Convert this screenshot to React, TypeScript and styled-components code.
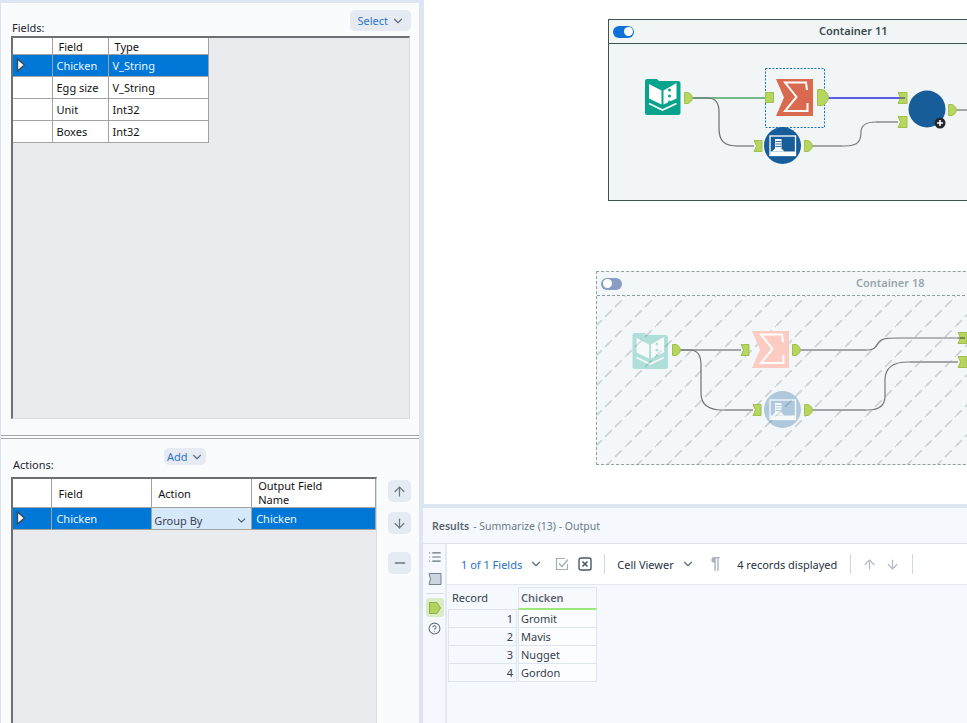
import React from "react";
import styled, { createGlobalStyle } from "styled-components";
import { ArrowDown, ArrowUp, ChevronDown, CircleHelp, List, Minus } from "lucide-react";

const Global = createGlobalStyle`
  html, body { margin: 0; padding: 0; width: 967px; height: 723px; overflow: hidden; background: #dde5f1; }
  * { box-sizing: border-box; }
  body { font-family: "Noto Sans", "Open Sans", sans-serif; font-size: 11px; color: #1c2733; }
`;

const Shell = styled.div`
  display: flex;
  width: 967px;
  height: 723px;
  overflow: hidden;
`;
const LeftPane = styled.div`
  width: 418px;
  margin: 3px 0 0 1px;
  display: flex;
  flex-direction: column;
  background: #f9fbfd;
  flex: none;
  overflow: hidden;
`;
const FieldsSection = styled.section`
  height: 432px;
  flex: none;
  display: flex;
  flex-direction: column;
`;
const SectionHead = styled.div`
  display: flex;
  justify-content: space-between;
  height: 33px;
  padding: 7px 8px 0 11px;
`;
const SectionLabel = styled.span`
  align-self: flex-end;
  font-size: 11px;
  line-height: 14px;
  padding-bottom: 1px;
`;
const PillButton = styled.button<{ $h: number; $pad: number; $gap: number }>`
  display: inline-flex;
  align-items: center;
  gap: ${(p) => p.$gap}px;
  height: ${(p) => p.$h}px;
  padding: 0 ${(p) => p.$pad - 1}px 0 ${(p) => p.$pad}px;
  border: 0;
  border-radius: 5px;
  background: #e6ebf3;
  color: #2f76c9;
  font: 11px "Noto Sans", sans-serif;
`;
const GridFrame = styled.div`
  margin: 0 0 0 10px;
  width: 399px;
  height: 383px;
  flex: none;
  background: #e9ebef;
  border-top: 2px solid #6d6f72;
  border-left: 2px solid #6d6f72;
  border-right: 1px solid #d9dbde;
  border-bottom: 1px solid #d9dbde;
`;
const DataTable = styled.table`
  border-collapse: collapse;
  table-layout: fixed;
  background: #fff;
  font-size: 11px;
`;
const HeadCell = styled.th<{ $h: number; $w: number }>`
  font-weight: 400;
  text-align: left;
  padding: 2px 0 0 6px;
  height: ${(p) => p.$h}px;
  width: ${(p) => p.$w}px;
  border-right: 1px solid #a3a3a3;
  border-bottom: 1px solid #a3a3a3;
  line-height: 14px;
  color: #111;
`;
const WrappedHeadCell = styled(HeadCell)`
  padding-top: 0;
`;
const Row = styled.tr<{ $selected?: boolean }>`
  background: ${(p) => (p.$selected ? "#0078d7" : "#fff")};
  color: ${(p) => (p.$selected ? "#eef6fd" : "#111")};
`;
const Cell = styled.td`
  height: 22px;
  padding: 0 0 0 4px;
  border-right: 1px solid #a3a3a3;
  border-bottom: 1px solid #a3a3a3;
  white-space: nowrap;
`;
const PointerCell = styled(Cell)`
  padding: 2px 0 0 3px;
  vertical-align: middle;
`;
const DropCell = styled(Cell)`
  background: #d6e9fb;
  color: #1c2733;
  padding: 3px 3px 0 2px;
`;
const DropInner = styled.div`
  display: flex;
  justify-content: space-between;
  align-items: center;
  color: #39424c;
`;
const Divider = styled.div`
  height: 4px;
  flex: none;
  border-top: 1px solid #a3a6aa;
  border-bottom: 1px solid #a3a6aa;
`;
const ActionsSection = styled.section`
  flex: 1;
  display: flex;
  flex-direction: column;
  min-height: 0;
`;
const ActionsHead = styled.div`
  display: flex;
  flex: none;
  height: 38px;
  padding: 9px 0 0 12px;
`;
const ActionsLabel = styled(SectionLabel)`
  width: 151px;
  padding-bottom: 5px;
  flex: none;
`;
const ActionsBody = styled.div`
  flex: none;
  display: flex;
  padding-left: 10px;
  gap: 11px;
`;
const ActionsGrid = styled(GridFrame)`
  margin: 0;
  width: 366px;
  height: 260px;
`;
const SideButtons = styled.div`
  display: flex;
  flex-direction: column;
  gap: 10px;
  padding-top: 3px;
`;
const SquareButton = styled.button<{ $gap?: boolean }>`
  width: 23px;
  height: 22px;
  padding: 0;
  border: 0;
  border-radius: 5px;
  background: #e6ebf3;
  color: #6b7785;
  display: flex;
  align-items: center;
  justify-content: center;
  margin-top: ${(p) => (p.$gap ? "8px" : "0")};
`;
const RightPane = styled.div`
  flex: 1;
  margin-left: 5px;
  display: flex;
  flex-direction: column;
  min-width: 0;
`;
const Canvas = styled.div`
  height: 504px;
  flex: none;
  position: relative;
  background: #fff;
  overflow: hidden;
`;
const Container = styled.div<{ $x: number; $y: number; $h: number; $off?: boolean }>`
  position: absolute;
  left: ${(p) => p.$x}px;
  top: ${(p) => p.$y}px;
  width: 420px;
  height: ${(p) => p.$h}px;
  background: ${(p) => (p.$off ? "#f3f7f9" : "#f1f5f6")};
  border: 1px ${(p) => (p.$off ? "dashed #8fa09f" : "solid #3b5454")};
`;
const ContainerBar = styled.div<{ $off?: boolean }>`
  height: 24px;
  display: flex;
  align-items: center;
  padding-left: 4px;
  border-bottom: 1px ${(p) => (p.$off ? "dashed #8fa09f" : "solid #3b5454")};
`;
const Toggle = styled.span<{ $on?: boolean }>`
  width: 21px;
  height: 12px;
  border-radius: 6px;
  flex: none;
  position: relative;
  background: ${(p) => (p.$on ? "#0f72d8" : "#8a9dc2")};
  &::after {
    content: "";
    position: absolute;
    top: 1.5px;
    left: ${(p) => (p.$on ? "10.5px" : "1.5px")};
    width: 9px;
    height: 9px;
    border-radius: 50%;
    background: #fff;
  }
`;
const ContainerTitle = styled.span<{ $off?: boolean; $ml: number }>`
  margin: -2px 0 0 ${(p) => p.$ml}px;
  font-size: 11px;
  font-weight: 600;
  white-space: nowrap;
  color: ${(p) => (p.$off ? "#97a4a8" : "#3c4a50")};
`;
const Diagram = styled.svg`
  position: absolute;
  left: 0;
  top: 0;
  width: 543px;
  height: 504px;
`;
const ResultsBand = styled.div`
  height: 4px;
  flex: none;
  background: #dde5f1;
  margin-left: -1px;
`;
const Results = styled.div`
  flex: 1;
  display: flex;
  flex-direction: column;
  background: #f5f8fd;
  min-height: 0;
  margin-left: -1px;
`;
const ResultsHead = styled.div`
  height: 36px;
  flex: none;
  padding: 0 0 0 9px;
  display: flex;
  align-items: center;
  gap: 4px;
  color: #6c7a88;
  font-size: 10.5px;
  border-bottom: 1px solid #dde5f1;
`;
const ResultsStrong = styled.strong`
  font-weight: 600;
  color: #59646f;
`;
const ResultsBody = styled.div`
  flex: 1;
  display: flex;
  min-height: 0;
`;
const SideRail = styled.div`
  width: 24px;
  flex: none;
  display: flex;
  flex-direction: column;
  align-items: center;
  padding: 2px 0 0 1px;
  border-right: 2px solid #e4eaf3;
  color: #66727f;
`;
const RailIcon = styled.span<{ $active?: boolean }>`
  width: 18px;
  height: ${(p) => (p.$active ? 19 : 22)}px;
  display: flex;
  align-items: center;
  justify-content: center;
  border-radius: 3px;
  background: ${(p) => (p.$active ? "#d8ecc5" : "transparent")};
`;
const RailRule = styled.div`
  width: 18px;
  height: 1px;
  margin: 3px 0 4px;
  background: #d6dde7;
`;
const ResultsMain = styled.div`
  flex: 1;
  display: flex;
  flex-direction: column;
  min-width: 0;
`;
const Toolbar = styled.div`
  height: 41px;
  flex: none;
  display: flex;
  align-items: center;
  background: #fff;
  border-bottom: 1px solid #e2e8f1;
  padding-left: 14px;
  font-size: 11px;
`;
const ToolLink = styled.span`
  display: inline-flex;
  align-items: center;
  gap: 7px;
  color: #2a6ec5;
  white-space: nowrap;
`;
const ToolText = styled.span`
  color: #26323e;
  white-space: nowrap;
  display: inline-flex;
  align-items: center;
  gap: 7px;
`;
const ToolRule = styled.span`
  width: 1px;
  height: 20px;
  background: #cfd7e2;
  flex: none;
`;
const Spacer = styled.span<{ $w: number }>`
  width: ${(p) => p.$w}px;
  flex: none;
`;
const Pilcrow = styled.span`
  font: 700 17px "Liberation Sans", sans-serif;
  color: #a9b1ba;
`;
const ResultTable = styled.div`
  margin: 2px 0 0 1px;
  display: grid;
  grid-template-columns: 69px 79px;
  column-gap: 1px;
  width: 149px;
  font-size: 11px;
  color: #35404b;
`;
const RecordHead = styled.div`
  height: 23px;
  background: #f5f8fd;
  display: flex;
  align-items: center;
  padding: 0 0 1px 4px;
  border-bottom: 1px solid #dde5f1;
`;
const ColumnHead = styled(RecordHead)`
  font-weight: 600;
  color: #5d6872;
  border: 1px solid #dde5f1;
  border-bottom: 2px solid #9be87d;
  padding-left: 2px;
  background: #f7f9fd;
`;
const RecordCell = styled.div`
  height: 18px;
  background: #f5f8fd;
  border: 1px solid #dde5f1;
  border-top: 0;
  text-align: right;
  padding-right: 3px;
  line-height: 17px;
`;
const ValueCell = styled(RecordCell)`
  background: #fcfdff;
  text-align: left;
  padding-left: 2px;
`;
const ToolArrow = styled.span`
  color: #b3bbc5;
  display: inline-flex;
`;

const Pointer = () => (
  <svg width="10" height="14" viewBox="0 0 10 14">
    <path d="M1.5 1 L8.5 7 L1.5 13 Z" fill="#f3f6f9" stroke="#3d4650" strokeWidth="1.3" />
  </svg>
);

const OX = 424;

type Pt = { x: number; y: number; w?: number; h?: number };
const Out = ({ x, y, w = 8, h = 11 }: Pt) => (
  <path d={`M${x} ${y}H${x + w * 0.45}C${x + w * 0.8} ${y + h * 0.1} ${x + w} ${y + h * 0.35} ${x + w} ${y + h / 2}C${x + w} ${y + h * 0.65} ${x + w * 0.8} ${y + h * 0.9} ${x + w * 0.45} ${y + h}H${x}Z`} fill="#b7d65d" stroke="#a1bf50" strokeWidth="1" />
);
const InNotch = ({ x, y, w = 8, h = 11 }: Pt) => (
  <path d={`M${x} ${y}H${x + w}V${y + h}H${x}L${x + 2.5} ${y + h / 2}Z`} fill="#b7d65d" stroke="#a1bf50" strokeWidth="1" />
);
const InFlat = ({ x, y, w = 8, h = 10 }: Pt) => (
  <rect x={x} y={y} width={w} height={h} fill="#b7d65d" stroke="#a1bf50" strokeWidth="1" />
);

const BookIcon = ({ x, y, o = 1 }: { x: number; y: number; o?: number }) => (
  <g transform={`translate(${x} ${y})`} opacity={o}>
    <path d="M2 0H12L14 2H33Q35.500 2 35.500 4.500V33.500Q35.500 36 33 36H2.500Q0 36 0 33.500V2Q0 0 2 0Z" fill="#07a38d" />
    <path d="M4 5L16.500 11.500V25.500L4 19.500Z" fill="#fff" />
    <path d="M18.500 11.500L31.500 4V19.500L18.500 25.500Z" fill="#fff" />
    <circle cx="24.500" cy="11" r="1.500" fill="#07a38d" />
    <circle cx="24.500" cy="17" r="1.500" fill="#07a38d" />
    <circle cx="24.500" cy="23" r="1.500" fill="#07a38d" />
    <path d="M4 24.500L17.500 31L31.500 24.500" fill="none" stroke="#fff" strokeWidth="1.600" />
  </g>
);
const SigmaIcon = ({ x, y, o = 1, fill = "#d96a4f" }: { x: number; y: number; o?: number; fill?: string }) => (
  <g transform={`translate(${x} ${y})`} opacity={o}>
    <path d="M0 0H37V37H0L8 18.500Z" fill={fill} />
    <path d="M31 11L30 3.500H9L20.500 18L9 32H31.500V24" fill="none" stroke="#fff" strokeWidth="2" />
  </g>
);
const WindowCircle = ({ cx, cy, o = 1 }: { cx: number; cy: number; o?: number }) => (
  <g transform={`translate(${cx} ${cy})`} opacity={o}>
    <circle r="18.500" fill="#175d9a" />
    <rect x="-12.500" y="-9.500" width="25.500" height="19.500" fill="none" stroke="#fff" strokeWidth="1.300" />
    <path d="M-12 6H13V10H-12Z" fill="#fff" />
    <path d="M-7.500 -6.500H-1V3L2 6H-10.500L-7.500 3Z" fill="#fff" />
    <path d="M-7 -4H-1.500M-7 -1.500H-1.500M-7 1H-1.500" stroke="#175d9a" strokeWidth="0.900" />
  </g>
);

const Wires = () => (
  <Diagram viewBox={`${OX} 0 543 504`}>
    <defs>
      <pattern id="hatch" patternUnits="userSpaceOnUse" x="596" y="296" width="30" height="30">
        <path d="M-0.900 30.900L30.900 -0.900" stroke="#c8d2d3" strokeWidth="1.700" strokeDasharray="9.400 4.740" />
      </pattern>
    </defs>
    <rect x="597" y="296" width="370" height="168" fill="url(#hatch)" />

    {/* Active container */}
    <path d="M692 98H765" stroke="#74b98c" strokeWidth="2" fill="none" />
    <path d="M692 98H708C716 98 719 103 719 112V128C719 141 724 146 738 146H754" stroke="#6b6f70" strokeWidth="1.200" fill="none" />
    <path d="M736 146H754" stroke="#a5a8a8" strokeWidth="2" fill="none" />
    <path d="M828 98H900" stroke="#5a5ae6" strokeWidth="2" fill="none" />
    <path d="M812 146H845C858 146 861 141 861 132C861 125 866 122 876 122H898" stroke="#7b7e7e" strokeWidth="1.200" fill="none" />
    <path d="M812 146H842M876 122H898" stroke="#a3a6a6" strokeWidth="2" fill="none" />
    <path d="M956 110H967" stroke="#a3a6a6" strokeWidth="2" fill="none" />
    <BookIcon x={645} y={79} />
    <Out x={684.500} y={92.500} />
    <rect x="765.500" y="68.500" width="59" height="59" fill="none" stroke="#1476d2" strokeDasharray="2 1.500" />
    <InFlat x={765.500} y={92.500} />
    <SigmaIcon x={776} y={79} />
    <Out x={817.500} y={89.500} w={11} h={16} />
    <InNotch x={754} y={140.500} />
    <WindowCircle cx={782.500} cy={145.500} />
    <Out x={804.500} y={140.500} />
    <InNotch x={898} y={92.500} w={9} />
    <path d="M900 98H905" stroke="#2f2f7c" strokeWidth="1" />
    <InNotch x={898} y={116.500} w={9} />
    <circle cx="927" cy="109" r="18.500" fill="#175d9a" />
    <Out x={948.500} y={104.500} />
    <circle cx="940" cy="123" r="5.500" fill="#23282c" />
    <path d="M937 123H943M940 120V126" stroke="#fff" strokeWidth="1.600" />

    {/* Disabled container */}
    <path d="M680 350H741" stroke="#a3a6a6" strokeWidth="2" fill="none" />
    <path d="M680 350H690C698 350 701 355 701 365V393C701 405 708 410 722 410H753" stroke="#6f7374" strokeWidth="1.200" fill="none" />
    <path d="M725 410H753" stroke="#a3a6a6" strokeWidth="2" fill="none" />
    <path d="M800 350H868C877 350 876 344 880 341C883 338 890 338 900 338H958" stroke="#75797a" strokeWidth="1.200" fill="none" />
    <path d="M800 350H866" stroke="#a3a6a6" strokeWidth="2" fill="none" />
    <path d="M812 410H868C880 410 885 405 885 396V380C885 368 892 362 908 362H958" stroke="#75797a" strokeWidth="1.200" fill="none" />
    <path d="M812 410H866M910 362H958" stroke="#a3a6a6" strokeWidth="2" fill="none" />
    <BookIcon x={632.500} y={333} o={0.28} />
    <Out x={672.500} y={344.500} />
    <InNotch x={741} y={344.500} />
    <SigmaIcon x={752} y={331} o={1} fill="#fccbc2" />
    <Out x={792.500} y={344.500} />
    <InNotch x={753} y={404.500} />
    <WindowCircle cx={782.500} cy={409.500} o={0.3} />
    <Out x={804.500} y={404.500} />
    <InNotch x={958} y={332.500} w={9} />
    <path d="M958 338H965" stroke="#3a3f41" strokeWidth="1" />
    <InNotch x={958} y={356.500} w={9} />
  </Diagram>
);

const CheckBoxIcon = () => (
  <svg width="14" height="14" viewBox="0 0 14 14" fill="none" stroke="#a4acb6" strokeWidth="1.200">
    <path d="M12.500 7V12.500H1.500V1.500H10" />
    <path d="M4 6.500L7 9.500L13 2.500" />
  </svg>
);
const CrossBoxIcon = () => (
  <svg width="14" height="14" viewBox="0 0 14 14" fill="none">
    <rect x="1" y="1" width="12" height="12" rx="2" stroke="#4a5968" strokeWidth="1.400" />
    <path d="M4.500 4.500L9.500 9.500M9.500 4.500L4.500 9.500" stroke="#4a5968" strokeWidth="1.600" />
  </svg>
);
const SheetIcon = () => (
  <svg width="14" height="14" viewBox="0 0 14 14">
    <path d="M1 1.500H13V12.500H1L2.500 7Z" fill="#cbd4e0" stroke="#76828f" strokeWidth="1" />
  </svg>
);
const OutputIcon = () => (
  <svg width="14" height="14" viewBox="0 0 14 14">
    <path d="M1.500 1.500H9L12.500 7L9 12.500H1.500Z" fill="#b5d35c" stroke="#92ac4b" strokeWidth="1" />
  </svg>
);

const records = ["Gromit", "Mavis", "Nugget", "Gordon"];
const fields = [
  ["Chicken", "V_String"],
  ["Egg size", "V_String"],
  ["Unit", "Int32"],
  ["Boxes", "Int32"],
];

export default function App() {
  return (
    <Shell>
      <Global />
      <LeftPane>
        <FieldsSection>
          <SectionHead>
            <SectionLabel>Fields:</SectionLabel>
            <PillButton $h={21} $pad={7} $gap={3}>
              Select <ChevronDown size={14} color="#5f6f82" />
            </PillButton>
          </SectionHead>
          <GridFrame>
            <DataTable>
              <thead>
                <tr>
                  <HeadCell $h={16} $w={39} />
                  <HeadCell $h={16} $w={56}>Field</HeadCell>
                  <HeadCell $h={16} $w={100}>Type</HeadCell>
                </tr>
              </thead>
              <tbody>
                {fields.map((f, i) => (
                  <Row key={f[0]} $selected={i === 0}>
                    <PointerCell>{i === 0 && <Pointer />}</PointerCell>
                    <Cell>{f[0]}</Cell>
                    <Cell>{f[1]}</Cell>
                  </Row>
                ))}
              </tbody>
            </DataTable>
          </GridFrame>
        </FieldsSection>
        <Divider />
        <ActionsSection>
          <ActionsHead>
            <ActionsLabel>Actions:</ActionsLabel>
            <PillButton $h={17} $pad={3} $gap={2}>
              Add <ChevronDown size={14} color="#5f6f82" />
            </PillButton>
          </ActionsHead>
          <ActionsBody>
            <ActionsGrid>
              <DataTable>
                <thead>
                  <tr>
                    <HeadCell $h={28} $w={39} />
                    <HeadCell $h={28} $w={100}>Field</HeadCell>
                    <HeadCell $h={28} $w={100}>Action</HeadCell>
                    <WrappedHeadCell $h={28} $w={124}>Output Field<br />Name</WrappedHeadCell>
                  </tr>
                </thead>
                <tbody>
                  <Row $selected>
                    <PointerCell><Pointer /></PointerCell>
                    <Cell>Chicken</Cell>
                    <DropCell>
                      <DropInner>Group By <ChevronDown size={13} color="#4d5a68" /></DropInner>
                    </DropCell>
                    <Cell>Chicken</Cell>
                  </Row>
                </tbody>
              </DataTable>
            </ActionsGrid>
            <SideButtons>
              <SquareButton aria-label="up"><ArrowUp size={15} /></SquareButton>
              <SquareButton aria-label="down"><ArrowDown size={15} /></SquareButton>
              <SquareButton $gap aria-label="remove"><Minus size={16} /></SquareButton>
            </SideButtons>
          </ActionsBody>
        </ActionsSection>
      </LeftPane>
      <RightPane>
        <Canvas>
          <Container $x={184} $y={19} $h={182}>
            <ContainerBar>
              <Toggle $on />
              <ContainerTitle $ml={185}>Container 11</ContainerTitle>
            </ContainerBar>
          </Container>
          <Container $x={172} $y={271} $h={194} $off>
            <ContainerBar $off>
              <Toggle />
              <ContainerTitle $off $ml={234}>Container 18</ContainerTitle>
            </ContainerBar>
          </Container>
          <Wires />
        </Canvas>
        <ResultsBand />
        <Results>
          <ResultsHead>
            <ResultsStrong>Results</ResultsStrong> - Summarize (13) - Output
          </ResultsHead>
          <ResultsBody>
            <SideRail>
              <RailIcon><List size={14} /></RailIcon>
              <RailIcon><SheetIcon /></RailIcon>
              <RailRule />
              <RailIcon $active><OutputIcon /></RailIcon>
              <RailIcon><CircleHelp size={13} /></RailIcon>
            </SideRail>
            <ResultsMain>
              <Toolbar>
                <ToolLink>1 of 1 Fields <ChevronDown size={14} color="#5d6975" /></ToolLink>
                <Spacer $w={12} />
                <CheckBoxIcon />
                <Spacer $w={9} />
                <CrossBoxIcon />
                <Spacer $w={12} />
                <ToolRule />
                <Spacer $w={12} />
                <ToolText>Cell Viewer <ChevronDown size={14} color="#5d6975" /></ToolText>
                <Spacer $w={16} />
                <Pilcrow>¶</Pilcrow>
                <Spacer $w={17} />
                <ToolText>4 records displayed</ToolText>
                <Spacer $w={13} />
                <ToolRule />
                <Spacer $w={11} />
                <ToolArrow><ArrowUp size={15} /></ToolArrow>
                <Spacer $w={8} />
                <ToolArrow><ArrowDown size={15} /></ToolArrow>
                <Spacer $w={12} />
                <ToolRule />
              </Toolbar>
              <ResultTable>
                <RecordHead>Record</RecordHead>
                <ColumnHead>Chicken</ColumnHead>
                {records.map((r, i) => (
                  <React.Fragment key={r}>
                    <RecordCell>{i + 1}</RecordCell>
                    <ValueCell>{r}</ValueCell>
                  </React.Fragment>
                ))}
              </ResultTable>
            </ResultsMain>
          </ResultsBody>
        </Results>
      </RightPane>
    </Shell>
  );
}
